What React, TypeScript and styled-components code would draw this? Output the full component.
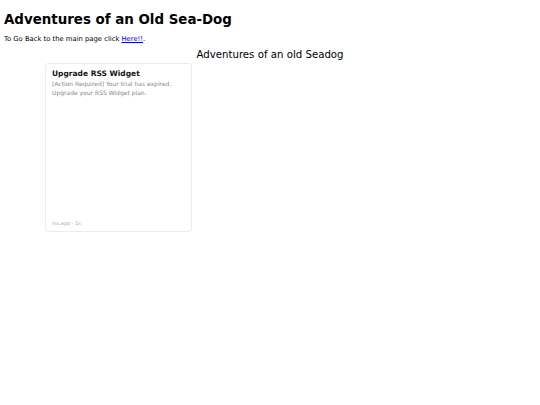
import React from 'react';
import styled, { createGlobalStyle } from 'styled-components';

const GlobalStyle = createGlobalStyle`
  body {
    margin: 4px;
    background: #ffffff;
    font-family: 'DejaVu Sans', Verdana, sans-serif;
    color: #000000;
  }
`;

const Title = styled.h1`
  font-size: 13.4px;
  font-weight: bold;
  margin: 8px 0 7.6px;
`;

const BackLine = styled.p`
  font-size: 6.8px;
  margin: 0 0 6.9px;
  a {
    color: #0000ee;
  }
`;

const SubTitle = styled.h2`
  font-size: 10.2px;
  font-weight: normal;
  text-align: center;
  margin: 0 0 2.6px;
`;

const Widget = styled.div`
  width: 147px;
  height: 169px;
  margin-left: 41px;
  box-sizing: border-box;
  border: 1px solid #ececec;
  border-radius: 3px;
  padding: 4.5px 6px 5px;
  display: flex;
  flex-direction: column;
`;

const WidgetTitle = styled.div`
  font-size: 7.5px;
  font-weight: bold;
  color: #111111;
  margin-bottom: 2.8px;
`;

const WidgetText = styled.div`
  font-size: 6px;
  line-height: 8.5px;
  color: #888888;
  flex: 1;
`;

const WidgetFooter = styled.div`
  font-size: 5px;
  color: #a8a8a8;
`;

export default function App() {
  return (
    <>
      <GlobalStyle />
      <Title>Adventures of an Old Sea-Dog</Title>
      <BackLine>
        To Go Back to the main page click <a href="#">Here!!</a>.
      </BackLine>
      <SubTitle>Adventures of an old Seadog</SubTitle>
      <Widget>
        <WidgetTitle>Upgrade RSS Widget</WidgetTitle>
        <WidgetText>
          [Action Required] Your trial has expired.
          <br />
          Upgrade your RSS Widget plan.
        </WidgetText>
        <WidgetFooter>rss.app · 1s</WidgetFooter>
      </Widget>
    </>
  );
}
